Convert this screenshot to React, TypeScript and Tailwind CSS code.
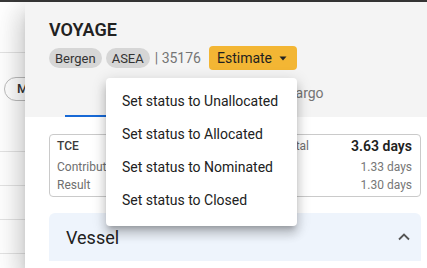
import type { ReactNode } from "react";

const statuses = ["Unallocated", "Allocated", "Nominated", "Closed"];

function Chip({ children }: { children: ReactNode }) {
  return (
    <span className="flex h-[20px] items-center rounded-full bg-[#d6d6d6] px-[6px] text-[13px] leading-none text-[#333]">
      {children}
    </span>
  );
}

function StatusMenu() {
  return (
    <div className="absolute right-0 top-[32px] z-10 w-[191px] rounded-[4px] bg-white pb-[9px] pt-[7px] shadow-[0_5px_5px_-3px_rgba(0,0,0,0.2),0_8px_10px_1px_rgba(0,0,0,0.14),0_3px_14px_2px_rgba(0,0,0,0.12)]">
      {statuses.map((s) => (
        <div key={s} className="flex h-[33px] items-center px-4 text-[14px] text-[#212121]">
          Set status to {s}
        </div>
      ))}
    </div>
  );
}

function BackgroundPage() {
  return (
    <div className="flex flex-col">
      <div className="h-[51px] border-b border-[#e3e3e3]" />
      <div className="h-[99px] border-b border-[#e3e3e3] pl-[4px] pt-[24px]">
        <span className="flex h-[24px] w-[80px] items-center rounded-full border border-[#bdbdbd] pl-[12px] text-[13px] font-medium text-[#333]">
          Manage
        </span>
      </div>
      <div className="h-[34px] border-b border-[#e3e3e3]" />
      <div className="h-[34px] border-b border-[#e3e3e3]" />
      <div className="h-[34px] border-b border-[#e3e3e3]" />
    </div>
  );
}

function TceCard() {
  return (
    <div className="rounded-[4px] border border-[#cacaca] pb-[3px] pl-[7px] pr-[8px] pt-[1px] text-[12px]">
      <div className="flex h-[20px] items-center">
        <span className="font-medium text-[#3c3c3c]">TCE</span>
        <span className="ml-auto text-[#6f6f6f]">Total</span>
        <span className="w-[103px] text-right text-[14px] font-semibold text-[#212121]">3.63 days</span>
      </div>
      <div className="mt-[2px] flex h-[18px] items-center text-[#6f6f6f]">
        <span>Contribution</span>
        <span className="ml-auto text-[#777]">1.33 days</span>
      </div>
      <div className="flex h-[17px] items-center text-[#6f6f6f]">
        <span>Result</span>
        <span className="ml-auto text-[#777]">1.30 days</span>
      </div>
    </div>
  );
}

export default function App() {
  return (
    <div className="flex h-[268px] w-[427px] flex-col overflow-hidden bg-white font-['Roboto','Noto_Sans',sans-serif]">
      <div className="h-[2px] bg-[#383838]" />
      <div className="relative flex-1">
        <BackgroundPage />

        <div className="absolute bottom-0 left-[25px] right-0 top-0 flex flex-col bg-white shadow-[0_8px_10px_-5px_rgba(0,0,0,0.2),0_16px_24px_2px_rgba(0,0,0,0.14),0_6px_30px_5px_rgba(0,0,0,0.12)]">
          <div className="bg-[#f4f4f4] px-[24px] pt-[16px]">
            <h1 className="text-[18px] font-semibold leading-[24px] text-[#212121]">VOYAGE</h1>
            <div className="mt-[4px] flex h-[24px] items-center gap-[4px]">
              <Chip>Bergen</Chip>
              <Chip>ASEA</Chip>
              <span className="ml-[1px] text-[14px] text-[#757575]">| 35176</span>
              <div className="relative ml-[4px]">
                <button
                  type="button"
                  className="flex h-[24px] w-[88px] items-center rounded-[4px] bg-[#f3b634] pl-[8px] text-[14px] text-[#1f1f1f]"
                >
                  Estimate
                  <svg className="ml-auto mr-[10px]" width="8" height="5" viewBox="0 0 8 5">
                    <path d="M0.5 0.5h7L4 4.5z" fill="#222" />
                  </svg>
                </button>
                <StatusMenu />
              </div>
            </div>
            <div className="ml-[16px] flex h-[47px] text-[14px] text-[#757575]">
              <div className="flex w-[146px] items-center justify-center border-b-2 border-[#1769d6] text-[#1769d6]">
                Itinerary
              </div>
              <div className="flex w-[60px] items-center justify-center">Vessel</div>
              <div className="flex w-[68px] items-center justify-center">Cargo</div>
            </div>
          </div>

          <div className="flex-1 pl-[24px] pr-[6px] pt-[17px]">
            <TceCard />
            <div className="mt-[16px] rounded-t-[6px] bg-[#eef4fc]">
              <div className="flex h-[48px] items-center pl-[17px] pr-[11px]">
                <span className="text-[18px] text-[#212121]">Vessel</span>
                <svg className="ml-auto" width="12" height="8" viewBox="0 0 12 8">
                  <polyline points="1,6.5 6,1.5 11,6.5" fill="none" stroke="#555" strokeWidth="1.8" />
                </svg>
              </div>
            </div>
          </div>
        </div>
      </div>
    </div>
  );
}
